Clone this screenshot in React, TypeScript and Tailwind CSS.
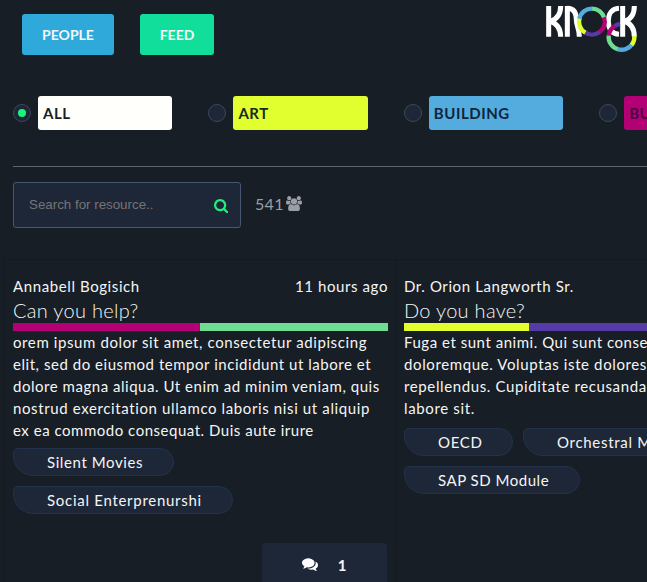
import type { ReactNode } from "react";

const filters = [
  { label: "ALL", color: "bg-[#fffffc] text-[#171e26]", checked: true },
  { label: "ART", color: "bg-[#e1ff2f] text-[#172a20]", checked: false },
  { label: "BUILDING", color: "bg-[#53abde] text-[#12243a]", checked: false },
  { label: "BUSINESS", color: "bg-[#b40075] text-[#4c0541]", checked: false },
];

function Logo() {
  return (
    <svg className="h-[60px] w-[117px] shrink-0" viewBox="0 0 351 180" fill="none">
      <g stroke="#fff" strokeWidth="15" strokeLinejoin="bevel">
        <path d="M56 18V110M92 18C92 42 82 57 62 64C82 71 92 86 92 110" />
        <path d="M112 110V18M112 25C130 25 139 38 139 60C139 78 148 84 148 110" />
        <path d="M267 25C246 26 235 41 235 64C235 87 246 102 267 103" />
        <path d="M278 18V110M313 18C313 42 304 57 285 64C304 71 313 86 313 110" />
      </g>
      <g strokeWidth="13">
        <path d="M186 26A38.5 38.5 0 0 1 223 54" stroke="#6fdd91" />
        <path d="M222 52A38.5 38.5 0 0 1 206 98" stroke="#b40075" />
        <path d="M208 97A38.5 38.5 0 0 1 163 96" stroke="#563aa5" />
        <path d="M166 98A38.5 38.5 0 0 1 149 53" stroke="#e1ff2f" />
        <path d="M148 56A38.5 38.5 0 0 1 187 26" stroke="#53abde" />
        <path d="M236 108A38.5 38.5 0 0 1 257 77" stroke="#b40075" />
        <path d="M255 78A38.5 38.5 0 0 1 270 72" stroke="#563aa5" />
        <path d="M236 107A38.5 38.5 0 0 0 265 148" stroke="#6fdd91" />
        <path d="M262 147A38.5 38.5 0 0 0 307 132" stroke="#53abde" />
        <path d="M305 135A38.5 38.5 0 0 0 313 108" stroke="#e1ff2f" />
      </g>
    </svg>
  );
}

function SearchIcon() {
  return (
    <svg className="mt-0.5 size-[14.5px] text-[#20ed7b]" viewBox="64 128 1664 1664" fill="currentColor">
      <path d="M1216 832q0-185-131.5-316.5t-316.5-131.5-316.5 131.5-131.5 316.5 131.5 316.5 316.5 131.5 316.5-131.5 131.5-316.5zm512 832q0 52-38 90t-90 38q-54 0-90-38l-343-342q-179 124-399 124-143 0-273.5-55.5t-225-150-150-225-55.5-273.5 55.5-273.5 150-225 225-150 273.5-55.5 273.5 55.5 225 150 150 225 55.5 273.5q0 220-124 399l343 343q37 37 37 90z" />
    </svg>
  );
}

function GroupIcon() {
  return (
    <svg className="h-[15px] w-4" viewBox="0 0 1920 1792" fill="currentColor">
      <path d="M593 896q-162 5-265 128h-134q-82 0-138-40.5t-56-118.5q0-353 124-353 6 0 43.5 21t97.5 42.5 119 21.5q67 0 133-23-5 37-5 66 0 139 81 256zm1071 637q0 120-73 189.5t-194 69.5h-874q-121 0-194-69.5t-73-189.5q0-53 3.5-103.5t14-109 26.5-108.5 43-97.5 62-81 85.5-53.5 111.5-20q10 0 43 21.5t73 48 107 48 135 21.5 135-21.5 107-48 73-48 43-21.5q61 0 111.5 20t85.5 53.5 62 81 43 97.5 26.5 108.5 14 109 3.500 103.500zm-1024-1277q0 106-75 181t-181 75-181-75-75-181 75-181 181-75 181 75 75 181zm704 384q0 159-112.5 271.5t-271.5 112.5-271.5-112.5-112.5-271.5 112.5-271.5 271.5-112.5 271.5 112.5 112.5 271.5zm576 225q0 78-56 118.5t-138 40.5h-134q-103-123-265-128 81-117 81-256 0-29-5-66 66 23 133 23 59 0 119-21.5t97.5-42.5 43.5-21q124 0 124 353zm-128-609q0 106-75 181t-181 75-181-75-75-181 75-181 181-75 181 75 75 181z" />
    </svg>
  );
}

function CommentsIcon() {
  return (
    <svg className="-mt-1 size-4 text-white" viewBox="0 0 1792 1792" fill="currentColor">
      <path d="M1408 768q0 139-94 257t-256.500 186.500-353.500 68.500q-86 0-176-16-124 88-278 128-36 9-86 16h-3q-11 0-20.500-8t-11.500-21q-1-3-1-6.500t.5-6.500 2-6l2.500-5 3.500-5.500 4-5 4.500-5 4-4.500q5-6 23-25t26-29.500 22.500-29 25-38.500 20.500-44q-124-72-195-177t-71-224q0-139 94-257t256.500-186.500 353.500-68.500 353.500 68.500 256.500 186.500 94 257zm384 256q0 120-71 224.500t-195 176.500q10 24 20.500 44t25 38.500 22.500 29 26 29.500 23 25q1 1 4 4.500t4.500 5 4 5 3.500 5.500l2.500 5 2 6 .5 6.500-1 6.500q-3 14-13 22t-22 7q-50-7-86-16-154-40-278-128-90 16-176 16-271 0-472-132 58 4 88 4 161 0 309-45t264-129q125-92 192-212t67-254q0-77-23-152 129 71 204 178t75 230z" />
    </svg>
  );
}

function Tag({ label, className }: { label: string; className: string }) {
  return (
    <span
      className={`h-7 shrink-0 whitespace-nowrap rounded-[5px_14px_14px_20px] border border-[#22324b] bg-[#1e2738] pl-[33px] leading-[27px] ${className}`}
    >
      {label}
    </span>
  );
}

interface Line {
  text: string;
  className: string;
}

interface CardProps {
  name: string;
  time: string;
  title: string;
  bar: ReactNode;
  lines: Line[];
  tagsClassName: string;
  tags: { label: string; className: string }[][];
  comments: number;
}

function Card({ name, time, title, bar, lines, tagsClassName, tags, comments }: CardProps) {
  return (
    <article className="flex h-[323px] w-[391px] shrink-0 flex-col border-l border-t border-[#141a21] pl-2 pr-[7px] pt-[15px]">
      <header className="flex justify-between leading-[22px] tracking-[0.6px]">
        <span>{name}</span>
        <span>{time}</span>
      </header>
      <h2 className="h-[26px] text-[20px] font-light leading-[26px] tracking-[0.3px]">{title}</h2>
      <div className="flex h-2 shrink-0">{bar}</div>
      <div className="whitespace-nowrap leading-[22px]">
        {lines.map(({ text, className }) => (
          <p key={text} className={className}>
            {text}
          </p>
        ))}
      </div>
      <div className={`flex flex-col gap-2.5 ${tagsClassName}`}>
        {tags.map((row) => (
          <div key={row[0].label} className="flex gap-2.5">
            {row.map((tag) => (
              <Tag key={tag.label} {...tag} />
            ))}
          </div>
        ))}
      </div>
      {comments > 0 && (
        <footer className="mr-px mt-auto flex h-[39px] w-[125px] items-center justify-center gap-5 self-end rounded-t bg-[#1e2738] pt-1.5 font-bold">
          <CommentsIcon />
          <span>{comments}</span>
        </footer>
      )}
    </article>
  );
}

export default function App() {
  return (
    <main className="h-[582px] w-[647px] overflow-hidden bg-[#171e25] font-[Lato,sans-serif] text-[15px] tracking-[0.75px] text-[#f5f5f5]">
      <nav className="flex h-24 items-start pl-[22px]">
        <button className="mt-3.5 h-[41px] w-[92px] rounded-[3px] bg-[#2fa9da] text-[14px] font-bold tracking-normal">PEOPLE</button>
        <button className="ml-[26px] mt-3.5 h-[41px] w-[74px] rounded-[3px] bg-[#12de9c] text-[14px] font-bold tracking-normal">FEED</button>
        <div className="ml-auto">
          <Logo />
        </div>
      </nav>
      <div className="ml-[13px] flex h-[71px] items-start gap-9 border-b border-[#62636d]">
        {filters.map(({ label, color, checked }) => (
          <label key={label} className="flex shrink-0 items-center gap-[7px]">
            <span className="flex size-[18px] items-center justify-center rounded-full border border-[#3c475c] bg-[#1e2738]">
              {checked && <span className="size-2 rounded-full bg-[#18f47a]" />}
            </span>
            <span className={`h-[34px] w-[134.4px] rounded-[3px] pl-[5px] text-[15px] font-bold leading-[34px] tracking-[0.55px] ${color}`}>{label}</span>
          </label>
        ))}
      </div>
      <div className="flex h-[92px] items-start pl-[13px] pt-[15px]">
        <div className="flex h-[46px] w-[228px] items-center rounded-[3px] border border-[#475772] bg-[#1e2738] pl-[15px] pr-3">
          <input
            className="min-w-0 flex-1 font-['Liberation_Sans',sans-serif] text-[13.33px] tracking-normal outline-none placeholder:text-[#757575]"
            placeholder="Search for resource.."
          />
          <SearchIcon />
        </div>
        <div className="ml-3.5 flex h-[43px] items-center gap-[3px] text-[#9b9ea5]">
          <span className="w-7 text-[16px] tracking-[0.3px]">541</span>
          <GroupIcon />
        </div>
      </div>
      <section className="flex pl-1">
        <Card
          name="Annabell Bogisich"
          time="11 hours ago"
          title="Can you help?"
          bar={
            <>
              <span className="w-[187px] bg-[#b40075]" />
              <span className="flex-1 bg-[#6fdd91]" />
            </>
          }
          lines={[
            { text: "orem ipsum dolor sit amet, consectetur adipiscing", className: "tracking-[0.6px]" },
            { text: "elit, sed do eiusmod tempor incididunt ut labore et", className: "tracking-[0.54px]" },
            { text: "dolore magna aliqua. Ut enim ad minim veniam, quis", className: "tracking-[0.53px]" },
            { text: "nostrud exercitation ullamco laboris nisi ut aliquip", className: "tracking-[0.62px]" },
            { text: "ex ea commodo consequat. Duis aute irure", className: "tracking-[0.52px]" },
          ]}
          tagsClassName="mt-[7px]"
          tags={[
            [{ label: "Silent Movies", className: "w-[161px] tracking-[0.6px]" }],
            [{ label: "Social Enterprenurshi", className: "w-[220px] tracking-[0.72px]" }],
          ]}
          comments={1}
        />
        <Card
          name="Dr. Orion Langworth Sr."
          time="12 hours ago"
          title="Do you have?"
          bar={
            <>
              <span className="w-1/3 bg-[#e1ff2f]" />
              <span className="w-2/3 bg-[#563aa5]" />
            </>
          }
          lines={[
            { text: "Fuga et sunt animi. Qui sunt consequatur", className: "tracking-[0.53px]" },
            { text: "doloremque. Voluptas iste dolores", className: "tracking-[0.62px]" },
            { text: "repellendus. Cupiditate recusandae", className: "tracking-[0.62px]" },
            { text: "labore sit.", className: "tracking-[0.65px]" },
          ]}
          tagsClassName="mt-[9px]"
          tags={[
            [
              { label: "OECD", className: "w-[109px] tracking-[0.7px]" },
              { label: "Orchestral Music", className: "w-[190px] tracking-[0.7px]" },
            ],
            [{ label: "SAP SD Module", className: "w-[176px] tracking-[0.52px]" }],
          ]}
          comments={0}
        />
      </section>
    </main>
  );
}
